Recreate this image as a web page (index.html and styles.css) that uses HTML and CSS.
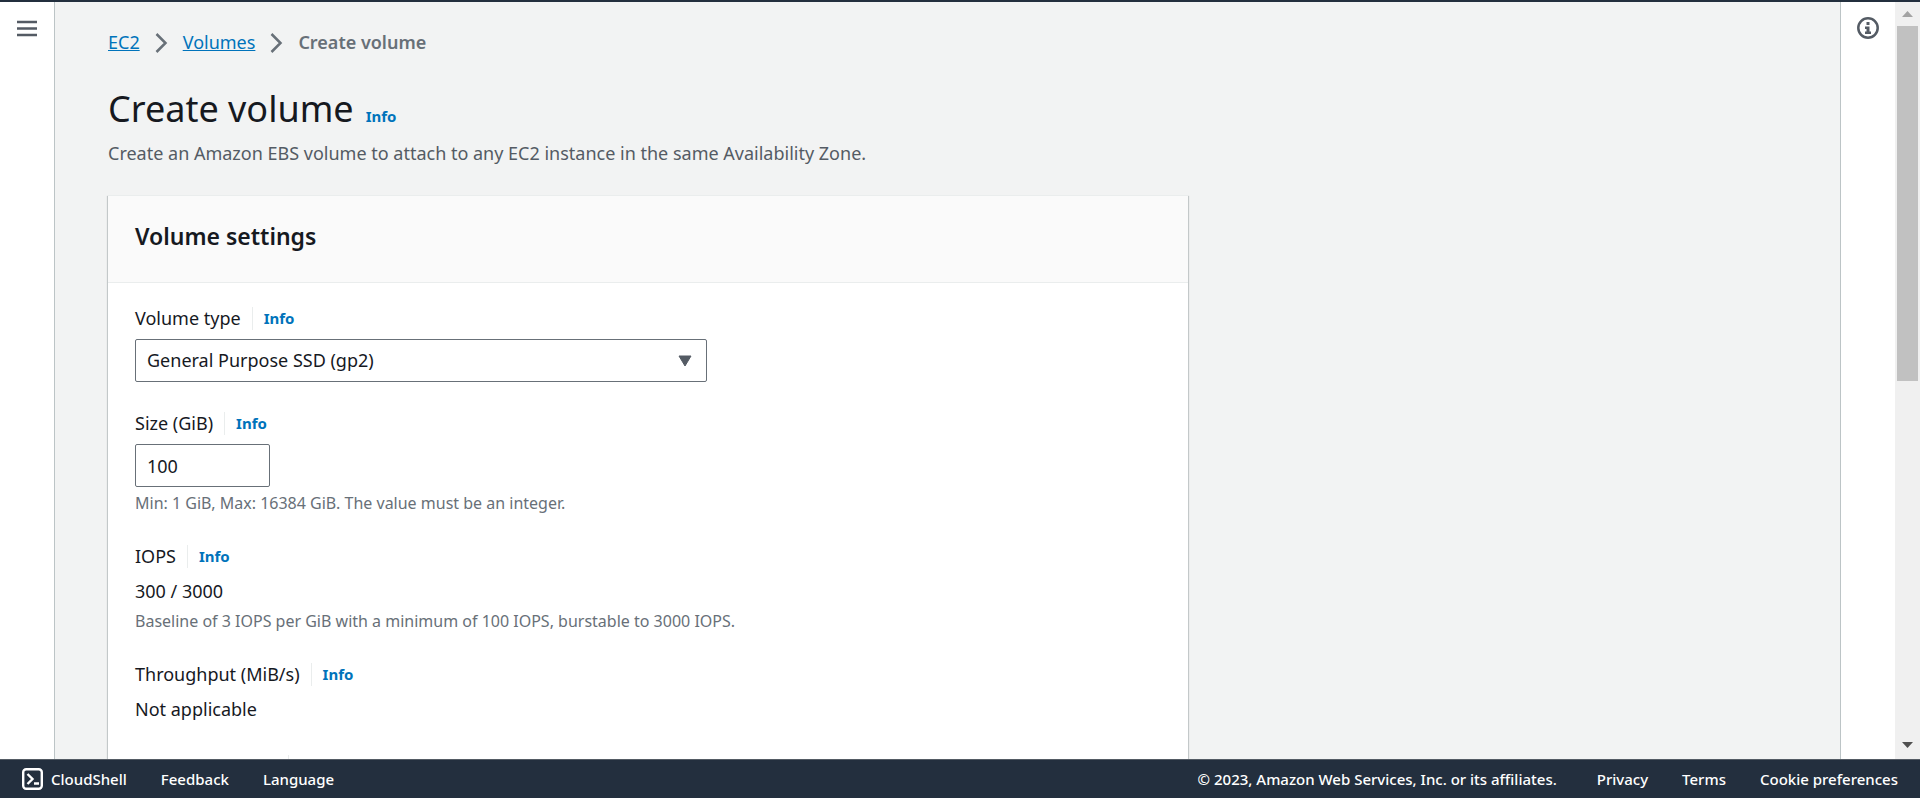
FILE: index.html
```html
<!DOCTYPE html>
<html lang="en">
<head>
<meta charset="utf-8">
<title>Create volume | EC2</title>
<link rel="stylesheet" href="styles.css">
</head>
<body>
<div class="workspace">
  <nav class="rail" aria-label="Navigation">
    <button class="icon-button" aria-label="Open navigation">
      <svg width="20" height="18" viewBox="0 0 20 18"><path d="M0 2h20M0 8.5h20M0 15h20" fill="none" stroke="#545b64" stroke-width="2.4"/></svg>
    </button>
  </nav>
  <main class="content">
    <nav class="breadcrumbs" aria-label="Breadcrumbs">
      <a href="#ec2">EC2</a>
      <svg class="chevron" width="13" height="20" viewBox="0 0 13 20"><path d="M1.5 1l9 9-9 9" fill="none" stroke="#687078" stroke-width="2.5"/></svg>
      <a href="#volumes">Volumes</a>
      <svg class="chevron" width="13" height="20" viewBox="0 0 13 20"><path d="M1.5 1l9 9-9 9" fill="none" stroke="#687078" stroke-width="2.5"/></svg>
      <span class="current">Create volume</span>
    </nav>
    <header class="page-header">
      <div class="title-row"><h1>Create volume</h1><a class="info" href="#info">Info</a></div>
      <p class="subtitle">Create an Amazon EBS volume to attach to any EC2 instance in the same Availability Zone.</p>
    </header>
    <section class="card">
      <div class="card-header"><h2>Volume settings</h2></div>
      <form class="fields">
        <div class="field">
          <div class="label-row"><label for="type">Volume type</label><a class="info" href="#type-info">Info</a></div>
          <div class="select-wrap">
            <select id="type" class="control"><option>General Purpose SSD (gp2)</option></select>
            <svg class="caret" width="14" height="12" viewBox="0 0 14 12"><path d="M1 1h12L7 11z" fill="#545b64" stroke="#545b64" stroke-linejoin="round"/></svg>
          </div>
        </div>
        <div class="field">
          <div class="label-row"><label for="size">Size (GiB)</label><a class="info" href="#size-info">Info</a></div>
          <input id="size" class="control size" type="text" value="100">
          <p class="hint">Min: 1 GiB, Max: 16384 GiB. The value must be an integer.</p>
        </div>
        <div class="field">
          <div class="label-row"><span>IOPS</span><a class="info" href="#iops-info">Info</a></div>
          <p class="value">300 / 3000</p>
          <p class="hint">Baseline of 3 IOPS per GiB with a minimum of 100 IOPS, burstable to 3000 IOPS.</p>
        </div>
        <div class="field">
          <div class="label-row"><span>Throughput (MiB/s)</span><a class="info" href="#throughput-info">Info</a></div>
          <p class="value">Not applicable</p>
        </div>
        <div class="field">
          <div class="label-row"><span class="label-space"></span><span class="info">&nbsp;</span></div>
        </div>
      </form>
    </section>
  </main>
  <aside class="rail rail-right">
    <button class="icon-button" aria-label="Open help">
      <svg width="22" height="22" viewBox="0 0 22 22"><circle cx="11" cy="11" r="9.7" fill="none" stroke="#545b64" stroke-width="2.5"/><path d="M9.5 5h3v3h-3zM8 9.5h4.5v5H14V17H8v-2.500h1.500V12H8z" fill="#545b64"/></svg>
    </button>
  </aside>
  <div class="scrollbar" aria-hidden="true">
    <svg width="25" height="24" viewBox="0 0 25 24"><path d="M7 15l5.500-6 5.500 6z" fill="#a3a3a3"/></svg>
    <div class="track"><div class="thumb"></div></div>
    <svg width="25" height="24" viewBox="0 0 25 24"><path d="M7 7l5.500 6L18 7z" fill="#505050"/></svg>
  </div>
</div>
<footer class="footer">
  <button class="footer-item shell">
    <svg width="21" height="22" viewBox="0 0 21 22"><rect x="1.200" y="1.200" width="18.600" height="19.600" rx="3" fill="none" stroke="#fff" stroke-width="2.400"/><path d="M5.500 6l5 5-5 5M12 15.500h5" fill="none" stroke="#fff" stroke-width="2.400"/></svg>
    CloudShell
  </button>
  <a class="footer-item" href="#feedback">Feedback</a>
  <button class="footer-item">Language</button>
  <span class="copyright">© 2023, Amazon Web Services, Inc. or its affiliates.</span>
  <a class="footer-item" href="#privacy">Privacy</a>
  <a class="footer-item" href="#terms">Terms</a>
  <a class="footer-item" href="#cookies">Cookie preferences</a>
</footer>
</body>
</html>
```
FILE: styles.css
```css
* { box-sizing: border-box; }

body {
  margin: 0;
  height: 100vh;
  display: flex;
  flex-direction: column;
  overflow: hidden;
  border-top: 2px solid #232f3e;
  background: #f2f3f3;
  color: #16191f;
  font: 18px/23px "Noto Sans", sans-serif;
}

h1, h2, p { margin: 0; }

button { padding: 0; border: 0; background: none; font: inherit; color: inherit; }

.workspace { flex: 1; min-height: 0; display: flex; }

.rail {
  flex: none;
  width: 55px;
  display: flex;
  justify-content: center;
  align-items: flex-start;
  padding-top: 15px;
  background: #fff;
  border-right: 1px solid #bcc4c6;
}

.rail-right { border-right: 0; border-left: 1px solid #bcc4c6; }

.icon-button { display: flex; }
.rail:first-child .icon-button { padding-top: 3px; }

.content { flex: 1; min-width: 0; overflow: hidden; padding: 29px 53px 0; }

.breadcrumbs { display: flex; align-items: center; gap: 15px; }
.breadcrumbs a { color: #0073bb; }
.current { color: #687078; font-weight: 600; }

.page-header { padding: 32px 0 30px; }
.title-row { display: flex; align-items: baseline; gap: 12px; }

h1 { font-size: 36px; line-height: 46px; font-weight: 400; }
h2 { font-size: 23px; line-height: 28px; font-weight: 600; }

.info { color: #0073bb; font-size: 15px; font-weight: 700; text-decoration: none; }
.subtitle { padding-top: 10px; color: #545b64; }

.card {
  max-width: 1080px;
  background: #fff;
  border-top: 1px solid #eaeded;
  box-shadow: 0 1px 1px 0 rgba(0, 28, 36, 0.3), 1px 1px 1px 0 rgba(0, 28, 36, 0.15), -1px 1px 1px 0 rgba(0, 28, 36, 0.15);
}

.card-header {
  padding: 26px 27px 32px;
  background: #fafafa;
  border-bottom: 1px solid #eaeded;
}

.fields { display: flex; flex-direction: column; gap: 30px; padding: 24px 27px; }
.label-row { display: flex; align-items: center; margin-bottom: 9px; }
.label-row .info { margin-left: 11px; padding-left: 11px; border-left: 1px solid #eaeded; }
.label-space { width: 142px; }

.control {
  display: block;
  width: 100%;
  height: 43px;
  padding: 0 11px;
  border: 1px solid #687078;
  border-radius: 2px;
  background: #fff;
  color: #16191f;
  font: inherit;
  appearance: none;
}

.select-wrap { position: relative; max-width: 572px; }
.caret { position: absolute; right: 15px; top: 16px; pointer-events: none; }
.size { width: 135px; }
.hint { padding-top: 5px; color: #687078; font-size: 16px; }
.value { padding: 3px 0 4px; }
.value + .hint { padding-top: 3px; }

.scrollbar { flex: none; width: 25px; display: flex; flex-direction: column; background: #f0f0f0; }
.track { flex: 1; padding: 0 2px; }
.thumb { height: 50%; background: #c1c1c1; }

.footer {
  flex: none;
  display: flex;
  align-items: center;
  gap: 34px;
  height: 39px;
  padding: 0 22px;
  border-top: 1px solid #545b64;
  background: #232f3e;
  color: #fff;
  font-size: 15px;
  font-weight: 500;
}

.footer-item { color: #fff; text-decoration: none; }
.shell { display: flex; align-items: center; gap: 8px; }
.copyright { margin-left: auto; padding-right: 6px; }
```
